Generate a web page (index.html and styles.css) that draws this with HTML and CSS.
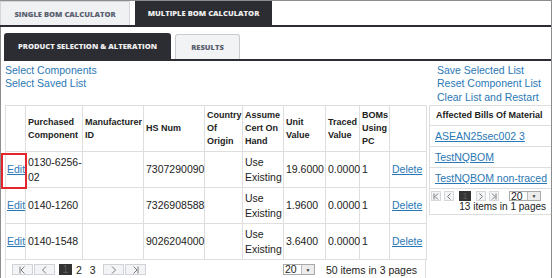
FILE: index.html
```html
<!DOCTYPE html>
<html lang="en">
<head>
    <meta charset="UTF-8">
    <title>Multiple BOM Calculator</title>
    <link rel="stylesheet" href="styles.css">
</head>
<body>
<div class="page">
    <div class="main-tabs">
        <div class="main-tab single">SINGLE BOM CALCULATOR</div>
        <div class="main-tab active">MULTIPLE BOM CALCULATOR</div>
    </div>

    <div class="panel">
        <div class="sub-tabs">
            <div class="sub-tab active">PRODUCT SELECTION &amp; ALTERATION</div>
            <div class="sub-tab results">RESULTS</div>
        </div>

        <div class="workspace">
            <div class="links">
                <a href="#">Select Components</a>
                <a href="#">Select Saved List</a>
            </div>
            <div class="links right">
                <a href="#">Save Selected List</a>
                <a href="#">Reset Component List</a>
                <a href="#">Clear List and Restart</a>
            </div>

            <div class="grid-box">
                <table class="grid">
                    <colgroup>
                        <col style="width:20px"><col style="width:57px"><col style="width:61px">
                        <col style="width:61px"><col style="width:38px"><col style="width:41px">
                        <col style="width:42px"><col style="width:34px"><col style="width:30px">
                        <col style="width:37px">
                    </colgroup>
                    <thead>
                        <tr>
                            <th></th>
                            <th>Purchased Component</th>
                            <th>Manufacturer ID</th>
                            <th>HS Num</th>
                            <th>Country Of Origin</th>
                            <th>Assume Cert On Hand</th>
                            <th>Unit Value</th>
                            <th>Traced Value</th>
                            <th>BOMs Using PC</th>
                            <th></th>
                        </tr>
                    </thead>
                    <tbody>
                        <tr>
                            <td class="edit marked"><a href="#">Edit</a></td>
                            <td><span class="nobr">0130-6256-</span><wbr>02</td>
                            <td></td>
                            <td>7307290090</td>
                            <td></td>
                            <td>Use Existing</td>
                            <td>19.6000</td>
                            <td>0.0000</td>
                            <td>1</td>
                            <td><a href="#">Delete</a></td>
                        </tr>
                        <tr>
                            <td class="edit"><a href="#">Edit</a></td>
                            <td>0140-1260</td>
                            <td></td>
                            <td>7326908588</td>
                            <td></td>
                            <td>Use Existing</td>
                            <td>1.9600</td>
                            <td>0.0000</td>
                            <td>1</td>
                            <td><a href="#">Delete</a></td>
                        </tr>
                        <tr>
                            <td class="edit"><a href="#">Edit</a></td>
                            <td>0140-1548</td>
                            <td></td>
                            <td>9026204000</td>
                            <td></td>
                            <td>Use Existing</td>
                            <td>3.6400</td>
                            <td>0.0000</td>
                            <td>1</td>
                            <td><a href="#">Delete</a></td>
                        </tr>
                    </tbody>
                </table>
                <div class="pager">
                    <div class="pager-left">
                        <span class="pg-btn"><svg width="7" height="8" viewBox="0 0 7 8"><path d="M1 0.5v7M5.5 0.5L2 4l3.5 3.5"/></svg></span>
                        <span class="pg-btn"><svg width="7" height="8" viewBox="0 0 7 8"><path d="M5 0.5L1.5 4L5 7.5"/></svg></span>
                        <span class="pg-current">1</span>
                        <span class="pg-num">2</span>
                        <span class="pg-num">3</span>
                        <span class="pg-btn gap"><svg width="7" height="8" viewBox="0 0 7 8"><path d="M2 0.5L5.5 4L2 7.5"/></svg></span>
                        <span class="pg-btn"><svg width="7" height="8" viewBox="0 0 7 8"><path d="M1.5 0.5L5 4l-3.5 3.5M6 0.5v7"/></svg></span>
                    </div>
                    <div class="pager-right">
                        <span class="size"><span class="size-val">20</span><span class="size-btn">&#9660;</span></span>
                        <span>50 items in 3 pages</span>
                    </div>
                </div>
            </div>

            <div class="bom">
                <div class="bom-head">Affected Bills Of Material</div>
                <div class="bom-row"><a href="#">ASEAN25sec002 3</a></div>
                <div class="bom-row"><a href="#">TestNQBOM</a></div>
                <div class="bom-row"><a href="#">TestNQBOM non-traced</a></div>
                <div class="bom-pager">
                    <div class="bom-pager-line">
                        <span class="sm-btn"><svg width="6" height="7" viewBox="0 0 6 7"><path d="M1 0.5v6M5 0.5L2 3.5l3 3"/></svg></span>
                        <span class="sm-btn"><svg width="6" height="7" viewBox="0 0 6 7"><path d="M4.5 0.5L1.5 3.5l3 3"/></svg></span>
                        <span class="sm-current">1</span>
                        <span class="sm-btn"><svg width="6" height="7" viewBox="0 0 6 7"><path d="M1.5 0.5l3 3-3 3"/></svg></span>
                        <span class="sm-btn"><svg width="6" height="7" viewBox="0 0 6 7"><path d="M1 0.5l3 3-3 3M5 0.5v6"/></svg></span>
                        <span class="size small"><span class="size-val">20</span><span class="size-btn">&#9660;</span></span>
                    </div>
                    <div class="bom-info">13 items in 1 pages</div>
                </div>
            </div>
        </div>
    </div>
</div>
</body>
</html>
```

FILE: styles.css
```css
body {
    margin: 0;
    font-family: "Liberation Sans", Arial, sans-serif;
    font-size: 10.5px;
    color: #222;
    background: #fff;
}
a {
    color: #2a78b5;
}
.nobr {
    white-space: nowrap;
}
.page {
    width: 551px;
    height: 277px;
    border-top: 1px solid #8d8d8d;
    border-right: 1px solid #8d8d8d;
    overflow: hidden;
}

/* top level tabs */
.main-tabs {
    display: flex;
    height: 25px;
    margin-top: -1px;
    border-bottom: 2px solid #2c2d32;
}
.main-tab {
    display: flex;
    align-items: center;
    justify-content: center;
    box-sizing: border-box;
    font-family: "Open Sans", sans-serif;
    font-weight: 800;
    font-size: 7.6px;
}
.main-tab.single {
    width: 130px;
    margin-top: 1px;
    background: #f0f1f3;
    border: 1px solid #d3d5d9;
    border-bottom: none;
    color: #596070;
}
.main-tab.active {
    width: 137px;
    margin-left: 5px;
    background: #2c2d32;
    color: #eeeeee;
}

.panel {
    border-left: 1px solid #8d8d8d;
    padding: 6px 0 0 3px;
    height: 100%;
}

/* second level tabs */
.sub-tabs {
    display: flex;
    gap: 4px;
    height: 26px;
    border-bottom: 2px solid #2c2d32;
}
.sub-tab {
    display: flex;
    align-items: center;
    justify-content: center;
    box-sizing: border-box;
    border-radius: 3px 3px 0 0;
    font-family: "Open Sans", sans-serif;
    font-weight: 800;
    font-size: 7.6px;
}
.sub-tab.active {
    width: 167px;
    background: #2c2d32;
    color: #eeeeee;
}
.sub-tab.results {
    width: 65px;
    margin-top: 1px;
    background: #f2f3f5;
    border: 1px solid #c8cbd0;
    border-bottom: none;
    color: #5a606c;
}

.workspace {
    display: grid;
    grid-template-columns: 421px 122px;
    column-gap: 3px;
    row-gap: 1px;
    padding: 2.5px 0 0 1px;
    align-items: start;
}
.links a {
    display: block;
    line-height: 13.5px;
    text-decoration: none;
}
.links.right {
    padding-left: 8px;
}

/* products grid */
.grid {
    width: 421px;
    border-collapse: collapse;
    table-layout: fixed;
}
.grid th, .grid td {
    border: 1px solid #dedede;
    padding: 0 2px;
    text-align: left;
    vertical-align: middle;
}
.grid th {
    font-size: 9px;
    font-weight: bold;
    line-height: 13px;
}
.grid td {
    line-height: 15px;
}
.grid thead tr {
    height: 46px;
}
.grid tbody tr {
    height: 36px;
}
.grid td.edit {
    padding: 0 1px;
}
.grid td.marked {
    position: relative;
}
.grid td.marked::after {
    content: "";
    position: absolute;
    left: -5px;
    top: 1px;
    width: 26px;
    height: 36px;
    box-sizing: border-box;
    border: 2px solid #e3262e;
}

.pager {
    display: flex;
    align-items: center;
    justify-content: space-between;
    height: 19px;
    padding: 0 8px 0 6px;
    border-left: 1px solid #dedede;
    border-right: 1px solid #dedede;
}
.pager-left, .pager-right {
    display: flex;
    align-items: center;
}
.pager-right {
    gap: 11px;
}
.pg-btn {
    display: flex;
    align-items: center;
    justify-content: center;
    box-sizing: border-box;
    width: 21px;
    height: 11px;
    margin-right: 1px;
    border: 1px solid #cfd2d6;
    background: #f3f4f5;
}
.pg-btn.gap {
    margin-left: 3px;
}
.pg-btn svg, .sm-btn svg {
    fill: none;
    stroke: #7a7a7a;
    stroke-width: 1;
}
.pg-current {
    width: 13px;
    height: 11px;
    margin-left: 3px;
    background: #333;
    color: #5c5c5c;
    text-align: center;
    line-height: 11px;
}
.pg-num {
    padding: 0 4px;
}
.size {
    display: flex;
    box-sizing: border-box;
    width: 32px;
    height: 11px;
    border: 1px solid #a9a9a9;
    background: #fff;
}
.size-val {
    flex: 1;
    padding-left: 1px;
    line-height: 9px;
}
.size-btn {
    width: 12px;
    display: flex;
    align-items: center;
    justify-content: center;
    border-left: 1px solid #bbb;
    background: #ececec;
    font-size: 5px;
    color: #333;
}

/* affected boms */
.bom {
    border: 1px solid #dedede;
    border-right: none;
}
.bom-head {
    height: 19px;
    line-height: 19px;
    padding-left: 6px;
    font-size: 9px;
    font-weight: bold;
    border-bottom: 1px solid #dedede;
}
.bom-row {
    height: 20px;
    line-height: 20px;
    padding-left: 5px;
    border-bottom: 1px solid #dedede;
}
.bom-pager {
    padding: 2px 0 1px 1px;
}
.bom-pager-line {
    display: flex;
    align-items: center;
    gap: 3px;
}
.sm-btn {
    display: flex;
    align-items: center;
    justify-content: center;
    box-sizing: border-box;
    width: 10px;
    height: 10px;
    border: 1px solid #d6d8db;
    background: #f3f4f5;
}
.sm-current {
    width: 12px;
    height: 10px;
    margin: 0 2px;
    background: #333;
    color: #5c5c5c;
    text-align: center;
    font-size: 9px;
    line-height: 10px;
}
.size.small {
    margin-left: 7px;
    height: 10px;
}
.bom-info {
    text-align: right;
    padding-right: 5px;
    font-size: 10px;
    line-height: 12px;
}
```
